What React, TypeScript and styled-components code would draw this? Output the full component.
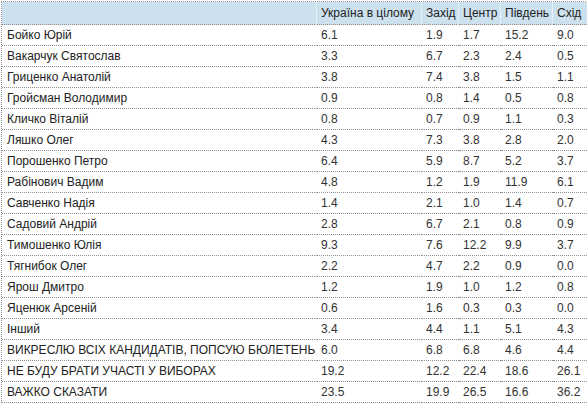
import React from 'react';
import styled, { createGlobalStyle } from 'styled-components';

const GlobalStyle = createGlobalStyle`
  body {
    margin: 0;
    background: #fff;
    font-family: "Liberation Sans", Arial, sans-serif;
  }
`;

const Table = styled.table`
  margin: 1px 0 0 1px;
  width: 585px;
  table-layout: fixed;
  border-collapse: separate;
  border-spacing: 0;
  border: 1px dotted #8f8f8f;
  border-bottom: none;
  font-size: 12px;
  color: #222;
`;

const HeadCell = styled.th<{ $last?: boolean }>`
  height: 22px;
  padding: 0 0 0 4px;
  background: #cde0ed;
  font-weight: normal;
  text-align: left;
  white-space: nowrap;
  border-right: ${(p) => (p.$last ? 'none' : '1px dotted #fff')};
  border-bottom: 1px dotted #8f8f8f;
`;

const Cell = styled.td<{ $num?: boolean }>`
  height: 20px;
  padding: 0 0 0 ${(p) => (p.$num ? '4px' : '5px')};
  white-space: nowrap;
  overflow: hidden;
  color: ${(p) => (p.$num ? '#333' : '#222')};
  border-bottom: 1px dotted #8f8f8f;
`;

const widths = [315, 105, 37, 42, 52, 34];
const headers = ['', 'Україна в цілому', 'Захід', 'Центр', 'Південь', 'Схід'];

const rows: [string, string, string, string, string, string][] = [
  ['Бойко Юрій', '6.1', '1.9', '1.7', '15.2', '9.0'],
  ['Вакарчук Святослав', '3.3', '6.7', '2.3', '2.4', '0.5'],
  ['Гриценко Анатолій', '3.8', '7.4', '3.8', '1.5', '1.1'],
  ['Гройсман Володимир', '0.9', '0.8', '1.4', '0.5', '0.8'],
  ['Кличко Віталій', '0.8', '0.7', '0.9', '1.1', '0.3'],
  ['Ляшко Олег', '4.3', '7.3', '3.8', '2.8', '2.0'],
  ['Порошенко Петро', '6.4', '5.9', '8.7', '5.2', '3.7'],
  ['Рабінович Вадим', '4.8', '1.2', '1.9', '11.9', '6.1'],
  ['Савченко Надія', '1.4', '2.1', '1.0', '1.4', '0.7'],
  ['Садовий Андрій', '2.8', '6.7', '2.1', '0.8', '0.9'],
  ['Тимошенко Юлія', '9.3', '7.6', '12.2', '9.9', '3.7'],
  ['Тягнибок Олег', '2.2', '4.7', '2.2', '0.9', '0.0'],
  ['Ярош Дмитро', '1.2', '1.9', '1.0', '1.2', '0.8'],
  ['Яценюк Арсеній', '0.6', '1.6', '0.3', '0.3', '0.0'],
  ['Інший', '3.4', '4.4', '1.1', '5.1', '4.3'],
  ['ВИКРЕСЛЮ ВСІХ КАНДИДАТІВ, ПОПСУЮ БЮЛЕТЕНЬ', '6.0', '6.8', '6.8', '4.6', '4.4'],
  ['НЕ БУДУ БРАТИ УЧАСТІ У ВИБОРАХ', '19.2', '12.2', '22.4', '18.6', '26.1'],
  ['ВАЖКО СКАЗАТИ', '23.5', '19.9', '26.5', '16.6', '36.2'],
];

export default function App() {
  return (
    <>
      <GlobalStyle />
      <Table>
        <colgroup>
          {widths.map((w, i) => (
            <col key={i} style={{ width: w }} />
          ))}
        </colgroup>
        <thead>
          <tr>
            {headers.map((h, i) => (
              <HeadCell key={i} $last={i === headers.length - 1}>
                {h}
              </HeadCell>
            ))}
          </tr>
        </thead>
        <tbody>
          {rows.map((r) => (
            <tr key={r[0]}>
              {r.map((v, i) => (
                <Cell key={i} $num={i > 0}>
                  {v}
                </Cell>
              ))}
            </tr>
          ))}
        </tbody>
      </Table>
    </>
  );
}
